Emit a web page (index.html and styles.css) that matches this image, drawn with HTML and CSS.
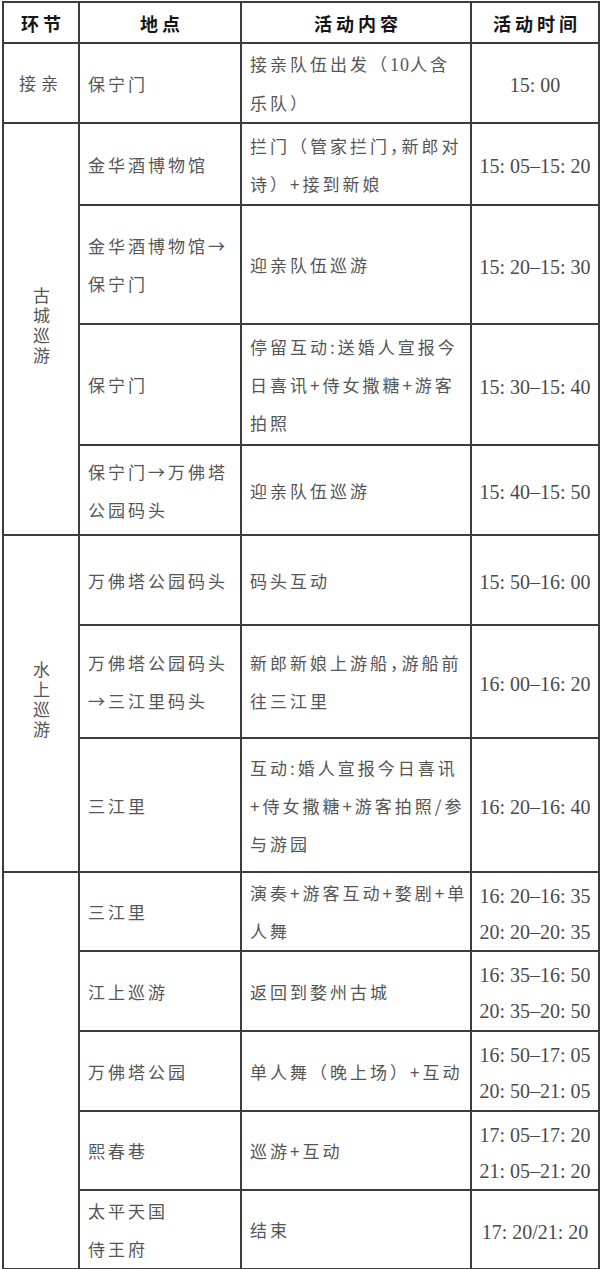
FILE: index.html
```html
<!DOCTYPE html>
<html lang="zh">
<head>
<meta charset="utf-8">
<title>迎亲活动流程</title>
<link rel="stylesheet" href="styles.css">
</head>
<body>
<table class="sched">
  <colgroup>
    <col class="c-sec"><col class="c-loc"><col class="c-act"><col class="c-time">
  </colgroup>
  <thead>
    <tr class="h-head">
      <th>环节</th><th>地点</th><th>活动内容</th><th>活动时间</th>
    </tr>
  </thead>
  <tbody>
    <tr class="h80">
      <td class="sec">接亲</td>
      <td class="loc">保宁门</td>
      <td class="act">接亲队伍出发（<span class="num">10</span>人含<br>乐队）</td>
      <td class="time">15: 00</td>
    </tr>
    <tr class="h82">
      <td class="sec vert" rowspan="4"><span class="vtext">古城巡游</span></td>
      <td class="loc">金华酒博物馆</td>
      <td class="act">拦门（管家拦门<span class="p">，</span>新郎对<br>诗）+接到新娘</td>
      <td class="time">15: 05–15: 20</td>
    </tr>
    <tr class="h119">
      <td class="loc">金华酒博物馆→<br>保宁门</td>
      <td class="act">迎亲队伍巡游</td>
      <td class="time">15: 20–15: 30</td>
    </tr>
    <tr class="h121">
      <td class="loc">保宁门</td>
      <td class="act">停留互动:送婚人宣报今<br>日喜讯+侍女撒糖+游客<br>拍照</td>
      <td class="time">15: 30–15: 40</td>
    </tr>
    <tr class="h90">
      <td class="loc">保宁门→万佛塔<br>公园码头</td>
      <td class="act">迎亲队伍巡游</td>
      <td class="time">15: 40–15: 50</td>
    </tr>
    <tr class="h90">
      <td class="sec vert open-bottom" rowspan="3"><span class="vtext">水上巡游</span></td>
      <td class="loc">万佛塔公园码头</td>
      <td class="act">码头互动</td>
      <td class="time">15: 50–16: 00</td>
    </tr>
    <tr class="h113">
      <td class="loc">万佛塔公园码头<br>→三江里码头</td>
      <td class="act">新郎新娘上游船<span class="p">，</span>游船前<br>往三江里</td>
      <td class="time">16: 00–16: 20</td>
    </tr>
    <tr class="h134">
      <td class="loc">三江里</td>
      <td class="act">互动:婚人宣报今日喜讯<br>+侍女撒糖+游客拍照/参<br>与游园</td>
      <td class="time">16: 20–16: 40</td>
    </tr>
    <tr class="h79">
      <td class="sec open-top" rowspan="5"></td>
      <td class="loc">三江里</td>
      <td class="act">演奏+游客互动+婺剧+单<br>人舞</td>
      <td class="time">16: 20–16: 35<br>20: 20–20: 35</td>
    </tr>
    <tr class="h80">
      <td class="loc">江上巡游</td>
      <td class="act">返回到婺州古城</td>
      <td class="time">16: 35–16: 50<br>20: 35–20: 50</td>
    </tr>
    <tr class="h80">
      <td class="loc">万佛塔公园</td>
      <td class="act">单人舞（晚上场）+互动</td>
      <td class="time">16: 50–17: 05<br>20: 50–21: 05</td>
    </tr>
    <tr class="h79">
      <td class="loc">熙春巷</td>
      <td class="act">巡游+互动</td>
      <td class="time">17: 05–17: 20<br>21: 05–21: 20</td>
    </tr>
    <tr class="h79">
      <td class="loc">太平天国<br>侍王府</td>
      <td class="act">结束</td>
      <td class="time">17: 20/21: 20</td>
    </tr>
  </tbody>
</table>
</body>
</html>
```

FILE: styles.css
```css
html, body {
  margin: 0;
  padding: 0;
  background: #ffffff;
}

.sched {
  margin: 1px 0 0 2px;
  width: 596px;
  table-layout: fixed;
  border-collapse: collapse;
  font-family: "Noto Sans CJK SC", sans-serif;
  color: #555555;
}

.c-sec { width: 76px; }
.c-loc { width: 162px; }
.c-act { width: 230px; }
.c-time { width: 128px; }

.sched th,
.sched td {
  border: 2px solid #3c3c3c;
  padding: 0;
  vertical-align: middle;
  white-space: nowrap;
}

.sched th {
  font-weight: 700;
  font-size: 18px;
  letter-spacing: 4px;
  color: #161616;
  text-align: center;
  line-height: 24px;
  padding-left: 4px;
}

.h-head { height: 41px; }
.h79 { height: 79px; }
.h80 { height: 80px; }
.h82 { height: 82px; }
.h90 { height: 90px; }
.h113 { height: 113px; }
.h119 { height: 119px; }
.h121 { height: 121px; }
.h134 { height: 134px; }

.sec {
  font-size: 17px;
  letter-spacing: 5px;
  text-align: center;
  line-height: 24px;
  padding: 6px 0 0 4px;
}

.sched td.vert {
  padding: 0;
}

.vtext {
  display: inline-block;
  writing-mode: vertical-rl;
  font-size: 17px;
  letter-spacing: 3px;
  line-height: 20px;
}

.open-bottom { border-bottom-style: hidden; }
.open-top { border-top-style: hidden; }

.sched td.loc,
.sched td.act {
  font-size: 17px;
  letter-spacing: 3px;
  line-height: 38px;
  padding: 1px 4px 0 8px;
  text-align: left;
}

.p {
  font-feature-settings: "halt";
}

.num {
  font-family: "Liberation Serif", serif;
  font-size: 18px;
  letter-spacing: 1px;
}

.sched td.time {
  font-family: "Liberation Serif", serif;
  font-size: 20px;
  line-height: 36px;
  text-align: center;
  color: #4a4a4a;
  padding-top: 4px;
}
```
